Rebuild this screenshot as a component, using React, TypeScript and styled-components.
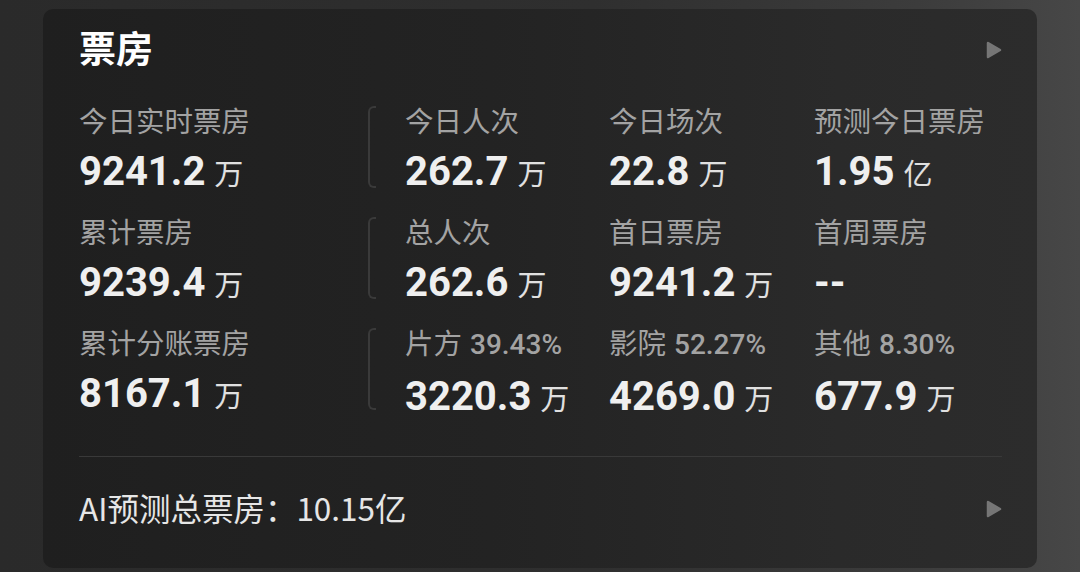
import React from "react";
import styled, { createGlobalStyle } from "styled-components";

const GlobalStyle = createGlobalStyle`
  html, body {
    margin: 0;
    padding: 0;
  }
  body {
    width: 1080px;
    height: 572px;
    overflow: hidden;
    background: linear-gradient(90deg, #2a2a2a 0%, #2f2f2f 55%, #3c3c3c 85%, #474747 100%);
    font-family: Roboto, "Noto Sans CJK SC", sans-serif;
  }
`;

const Page = styled.div`
  padding: 9px 43px 0 43px;
`;

const Card = styled.section`
  width: 994px;
  height: 559px;
  box-sizing: border-box;
  border-radius: 10px;
  background: linear-gradient(90deg, #1f1f1f 0%, #232323 45%, #2a2a2a 80%, #2c2c2c 100%);
  padding: 16px 35px 0 36px;
  display: flex;
  flex-direction: column;
`;

const Header = styled.header`
  display: flex;
  align-items: center;
  justify-content: space-between;
  height: 44px;
`;

const Title = styled.h2`
  margin: 0;
  font-family: "Noto Sans CJK SC", sans-serif;
  font-size: 37px;
  font-weight: 700;
  line-height: 44px;
  color: #ffffff;
`;

const HeaderArrow = styled.div`
  display: flex;
  padding-top: 6px;
`;

const Grid = styled.div`
  margin-top: 33px;
  display: grid;
  grid-template-columns: 289px 37px 204px 205px 1fr;
  row-gap: 17px;
`;

const Cell = styled.div`
  display: flex;
  flex-direction: column;
  gap: 10px;
`;

const BracketCell = styled.div`
  padding-top: 4px;
`;

const Bracket = styled.div`
  width: 6px;
  height: 78px;
  border: 2px solid #3a3a3a;
  border-right: none;
  border-radius: 6px 0 0 6px;
`;

const Label = styled.div`
  font-family: "Noto Sans CJK SC", sans-serif;
  font-size: 28.5px;
  line-height: 36px;
  color: #a3a3a3;
  white-space: nowrap;
  display: flex;
  align-items: baseline;
  gap: 8px;
`;

const Share = styled.span`
  font-family: Roboto, sans-serif;
  font-size: 28px;
  font-weight: 500;
  color: #a3a3a3;
`;

const Value = styled.div`
  display: flex;
  align-items: baseline;
  gap: 9px;
  line-height: 48px;
  white-space: nowrap;
`;

const Number = styled.span`
  font-family: Roboto, sans-serif;
  font-size: 40px;
  font-weight: 700;
  color: #efefef;
`;

const Unit = styled.span`
  font-family: "Noto Sans CJK SC", sans-serif;
  font-size: 29px;
  color: #e0e0e0;
`;

const Divider = styled.hr`
  margin: 35px 0 0 0;
  border: none;
  height: 1px;
  background: #393939;
`;

const Footer = styled.footer`
  margin-top: 30px;
  display: flex;
  align-items: center;
  justify-content: space-between;
  height: 40px;
`;

const FooterText = styled.div`
  font-family: "Noto Sans CJK SC", sans-serif;
  font-size: 31.5px;
  line-height: 40px;
  color: #e6e6e6;
`;

const FooterArrow = styled.div`
  display: flex;
  padding-top: 4px;
`;

const Arrow = () => (
  <svg width="16" height="18" viewBox="0 0 16 18">
    <polygon
      points="2,2 14,9 2,16"
      fill="#767676"
      stroke="#767676"
      strokeWidth="2.5"
      strokeLinejoin="round"
    />
  </svg>
);

type Stat = { label: string; share?: string; value: string; unit?: string };

const rows: Stat[][] = [
  [
    { label: "今日实时票房", value: "9241.2", unit: "万" },
    { label: "今日人次", value: "262.7", unit: "万" },
    { label: "今日场次", value: "22.8", unit: "万" },
    { label: "预测今日票房", value: "1.95", unit: "亿" },
  ],
  [
    { label: "累计票房", value: "9239.4", unit: "万" },
    { label: "总人次", value: "262.6", unit: "万" },
    { label: "首日票房", value: "9241.2", unit: "万" },
    { label: "首周票房", value: "--" },
  ],
  [
    { label: "累计分账票房", value: "8167.1", unit: "万" },
    { label: "片方", share: "39.43%", value: "3220.3", unit: "万" },
    { label: "影院", share: "52.27%", value: "4269.0", unit: "万" },
    { label: "其他", share: "8.30%", value: "677.9", unit: "万" },
  ],
];

const StatCell = ({ stat }: { stat: Stat }) => (
  <Cell>
    <Label>
      {stat.label}
      {stat.share && <Share>{stat.share}</Share>}
    </Label>
    <Value>
      <Number>{stat.value}</Number>
      {stat.unit && <Unit>{stat.unit}</Unit>}
    </Value>
  </Cell>
);

export default function App() {
  return (
    <>
      <GlobalStyle />
      <Page>
        <Card>
          <Header>
            <Title>票房</Title>
            <HeaderArrow>
              <Arrow />
            </HeaderArrow>
          </Header>
          <Grid>
            {rows.map((row, i) => (
              <React.Fragment key={i}>
                <StatCell stat={row[0]} />
                <BracketCell>
                  <Bracket />
                </BracketCell>
                <StatCell stat={row[1]} />
                <StatCell stat={row[2]} />
                <StatCell stat={row[3]} />
              </React.Fragment>
            ))}
          </Grid>
          <Divider />
          <Footer>
            <FooterText>AI预测总票房：10.15亿</FooterText>
            <FooterArrow>
              <Arrow />
            </FooterArrow>
          </Footer>
        </Card>
      </Page>
    </>
  );
}
